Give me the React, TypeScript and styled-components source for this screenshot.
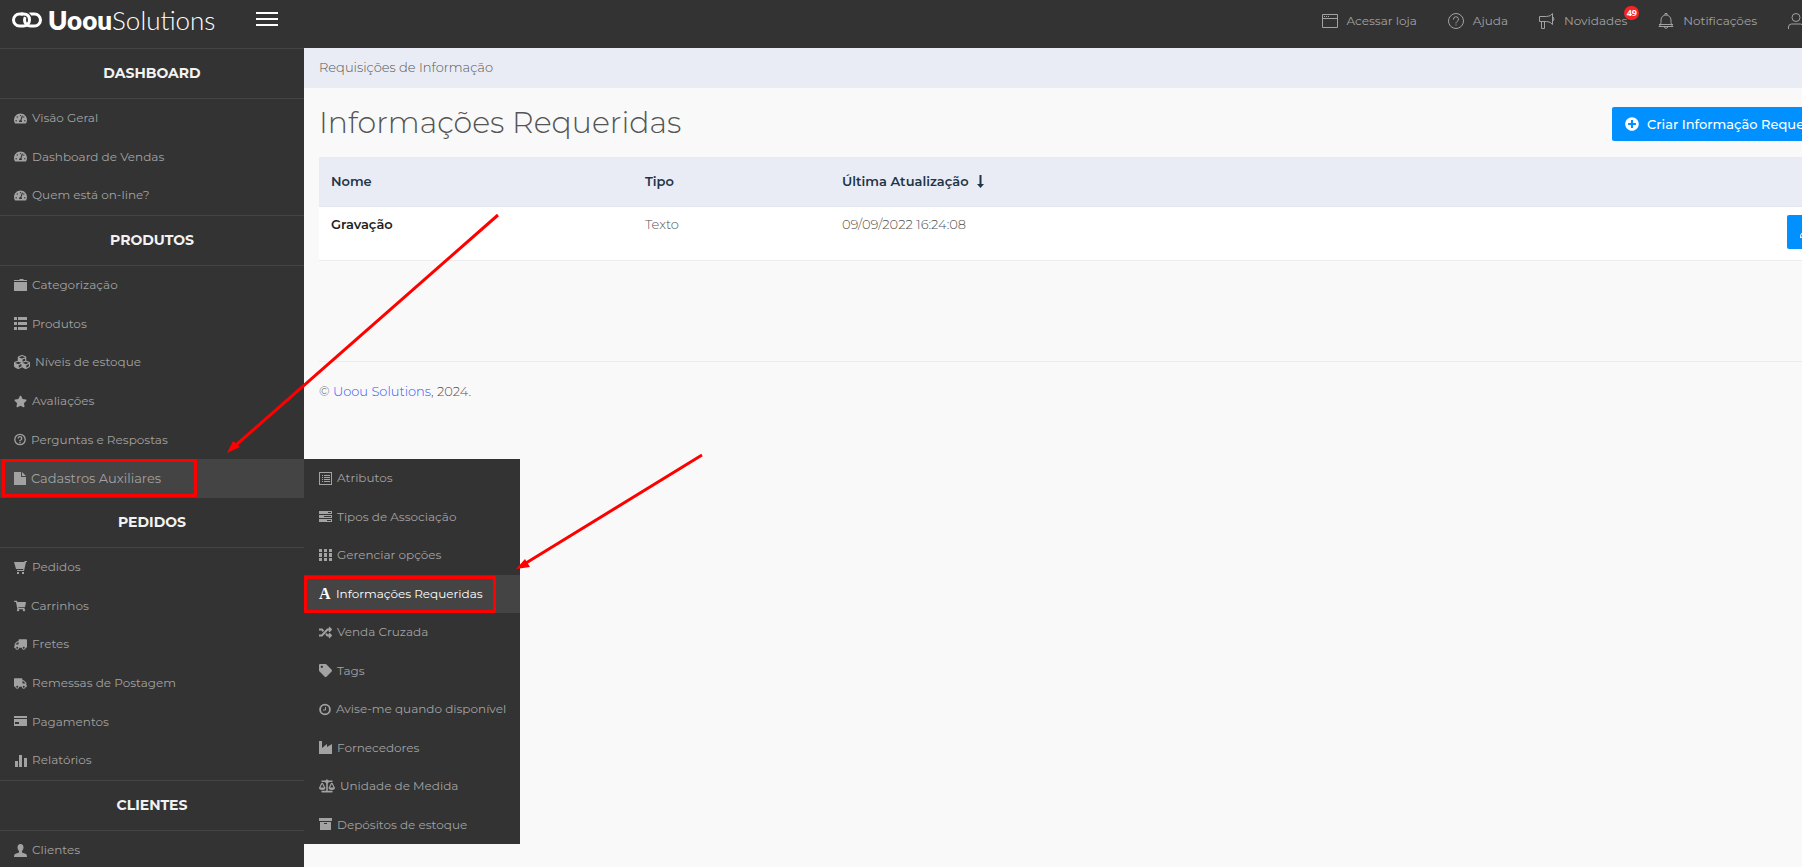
import React from "react";
import styled, { createGlobalStyle, css } from "styled-components";
import {
  FaTachometerAlt, FaCubes, FaStar, FaShoppingCart, FaTruck,
  FaRandom, FaTag, FaBalanceScale,
  FaPlusCircle, FaPencilAlt, FaTrash,
} from "react-icons/fa";

const Global = createGlobalStyle`
  *, *::before, *::after { box-sizing: border-box; }
  body { margin: 0; background: #f9f9f9; color: #555; font: 300 13px/18px Montserrat, Inter, sans-serif; }
  h1, h2, p, ul { margin: 0; padding: 0; }
  ul { list-style: none; }
  a { color: inherit; text-decoration: none; }
  button { font: inherit; border: 0; cursor: pointer; }
`;

const Viewport = styled.div`
  position: relative;
  height: 100vh;
  overflow: hidden;
`;
const Shell = styled.div`
  display: flex;
  flex-direction: column;
  width: calc(100% + 85px);
  min-height: 100%;
`;
const Header = styled.header`
  display: flex;
  align-items: center;
  height: 48px;
  flex: none;
  background: #333;
  color: #a2a2a2;
`;
const Brand = styled.a`
  display: flex;
  align-items: center;
  width: 256px;
  padding-left: 12px;
  height: 40px;
  margin-bottom: 8px;
  color: #fff;
  gap: 6px;
  font: 300 26px/28px Lato, sans-serif;
  b { font-weight: 800; }
`;
const MenuButton = styled.button`
  display: flex;
  padding: 0;
  margin-bottom: 10px;
  background: none;
  color: #fff;
`;
const TopNav = styled.nav`
  display: flex;
  margin-left: auto;
  margin-bottom: 7px;
  padding-right: 83px;
  gap: 31px;
`;
const TopLink = styled.a`
  position: relative;
  display: flex;
  align-items: center;
  gap: 9px;
  font-size: 12px;
  font-weight: 400;
`;
const Badge = styled.span`
  position: absolute;
  top: -6px;
  right: -12px;
  width: 15px;
  height: 14px;
  border-radius: 7px;
  background: #f62424;
  color: #fff;
  font: 700 9px/14px "Open Sans", sans-serif;
  text-align: center;
`;
const Body = styled.div`
  display: flex;
  flex: 1;
`;
const Sidebar = styled.nav`
  width: 304px;
  flex: none;
  background: #333;
  color: #a2a2a2;
`;
const GroupTitle = styled.h2<{ $joined?: boolean }>`
  border: solid #444;
  border-width: ${(p) => (p.$joined ? "0 0 1px" : "1px 0")};
  color: #f2f2f2;
  font-size: 14px;
  font-weight: 700;
  line-height: 49px;
  text-align: center;
`;
const Items = styled.ul`
  display: grid;
  grid-auto-rows: 39px 38px 39px;
`;
const Item = styled.li`
  position: relative;
`;
const ItemLink = styled.a<{ $active?: boolean; $bright?: boolean; $large?: boolean }>`
  display: flex;
  align-items: center;
  height: 100%;
  gap: 5px;
  padding: 0 0 1px 14px;
  font-size: ${(p) => (p.$large ? "13px" : "12px")};
  font-weight: 400;
  ${(p) => p.$active && css`background: #444;`}
  ${(p) => p.$bright && css`color: #fff;`}
  svg { flex: none; }
`;
const SubMenu = styled.ul`
  position: absolute;
  z-index: 2;
  top: 0;
  left: 100%;
  width: 216px;
  display: grid;
  grid-auto-rows: 39px 38px;
  background: #333;
  ${ItemLink} { padding-left: 15px; }
`;
const SerifLetter = styled.span`
  width: 12px;
  font: 700 16px/18px "Liberation Serif", serif;
`;
const Main = styled.main`
  flex: 1;
  min-width: 0;
`;
const Crumbs = styled.div`
  height: 40px;
  padding: 0 15px;
  background: #e9ecf4;
  line-height: 38px;
`;
const Content = styled.div`
  padding: 19px 15px;
`;
const TitleRow = styled.div`
  display: flex;
  justify-content: space-between;
  height: 34px;
  margin-bottom: 16px;
`;
const Title = styled.h1`
  font-size: 30px;
  font-weight: 300;
  line-height: 32px;
`;
const Primary = styled.button`
  display: flex;
  align-items: center;
  gap: 8px;
  width: 260px;
  height: 34px;
  padding: 0 13px;
  border-radius: 2px;
  background: #0090ff;
  color: #fff;
  font-weight: 500;
  white-space: nowrap;
`;
const SmallButton = styled(Primary)`
  width: 40px;
`;
const Actions = styled.div`
  display: flex;
  gap: 4px;
`;
const Table = styled.table`
  width: 100%;
  table-layout: fixed;
  border-collapse: collapse;
  background: #fff;
  text-align: left;
  th, td { padding: 0 12px; }
  thead th { height: 49px; background: #e9ecf4; color: #1f3547; font-weight: 600; border-bottom: 1px solid #e3e6ec; }
  tbody tr { border-bottom: 1px solid #ececec; vertical-align: top; }
  tbody th, tbody td { padding-top: 8px; height: 54px; }
  tbody th { color: #222; font-weight: 600; }
  tbody td:last-child { padding-right: 0; }
  thead svg { margin-left: 4px; vertical-align: -2px; }
`;
const Col = styled.col<{ $w?: number }>`
  width: ${(p) => (p.$w ? p.$w + "px" : "auto")};
`;
const Footer = styled.footer`
  margin-top: 100px;
  padding-top: 20px;
  border-top: 1px solid #ececec;
  a { color: #2f55f5; }
`;
const Marks = styled.svg`
  position: absolute;
  z-index: 3;
  inset: 0;
  width: 100%;
  height: 100%;
  pointer-events: none;
`;

const Glyph = ({ children, w = 13 }: { children: React.ReactNode; w?: number }) => (
  <svg width={w} height="13" viewBox={`0 0 ${w} 13`} fill="currentColor" aria-hidden="true">{children}</svg>
);
const Folder = () => <Glyph><path d="M1 1h4l1-1h3l1 1h3v1H0V1zM0 3h13v9H0z" /></Glyph>;
const ListRows = () => <Glyph><path d="M0 0h3v3H0zM4 0h9v3H4zM0 5h3v3H0zM4 5h9v3H4zM0 10h3v3H0zM4 10h9v3H4z" /></Glyph>;
const Basket = () => <Glyph><path d="M0 1h10l1-1h2v1h-1l-2 9H3V9h6l.5-1H2zM3 11h2v2H3zM8 11h2v2H8z" /></Glyph>;
const Card = () => <Glyph><path d="M0 1h13v2H0zM0 4h13v7H0zM1 7v2h4V7z" fillRule="evenodd" /></Glyph>;
const Bars = () => <Glyph><path d="M1 7h3v6H1zM5 1h3v12H5zM10 4h3v9h-3z" /></Glyph>;
const ListAlt = () => <Glyph><path d="M0 0h13v13H0zM1 1v11h11V1zM3 3h1v1H3zM5 3h6v1H5zM3 5h1v1H3zM5 5h6v1H5zM3 7h1v1H3zM5 7h6v1H5zM3 9h1v1H3zM5 9h6v1H5z" fillRule="evenodd" /></Glyph>;
const Tasks = () => <Glyph><path d="M0 1h13v3H0zM9 2v1h3V2zM0 5h13v3H0zM5 6v1h7V6zM0 9h13v3H0zM8 10v1h4v-1z" fillRule="evenodd" /></Glyph>;
const Grid = () => <Glyph><path d="M0 0h3v3H0zM5 0h3v3H5zM10 0h3v3h-3zM0 4h3v4H0zM5 4h3v4H5zM10 4h3v4h-3zM0 9h3v3H0zM5 9h3v3H5zM10 9h3v3h-3z" /></Glyph>;
const Page = () => <Glyph w={12}><path d="M0 0h7v5h5v8H0zM8 0l4 4H8z" /></Glyph>;
const Person = () => <Glyph><path d="M6.500 0q3 0 3 3.500 0 2-1.500 3.500v1.500l4 1.500q1 .5 1 3H0q0-2.500 1-3l4-1.500V7Q3.500 5.500 3.500 3.500 3.500 0 6.500 0z" /></Glyph>;
const Factory = () => <Glyph><path d="M0 0h3v7l5-4v3l5-3v10H0z" /></Glyph>;
const Box = () => <Glyph><path d="M0 0h13v3H0zM1 4h11v8H1zM5 5v1h3V5z" fillRule="evenodd" /></Glyph>;
const Clock = () => <Glyph w={12}><g fill="none" stroke="currentColor"><circle cx="6" cy="6.500" r="4.900" strokeWidth="1.800" /><path d="M6.500 4v3H4" /></g></Glyph>;
const Question = () => <Glyph w={12}><g fill="none" stroke="currentColor"><circle cx="6" cy="6.500" r="5.200" strokeWidth="1.300" /><path d="M4.200 5.500q0-1.800 1.800-1.800t1.800 1.500T6 7.500v.8M6 9v1.200" strokeWidth="1.300" /></g></Glyph>;
const SortArrow = () => <Glyph w={9}><path d="M3.500 0h2v9H8L4.500 13 1 9h2.500z" /></Glyph>;

const Line = ({ children }: { children: React.ReactNode }) => (
  <svg width="16" height="16" viewBox="0 0 16 16" fill="none" stroke="currentColor" aria-hidden="true">{children}</svg>
);

const Sections = [
  { title: "DASHBOARD", items: [
    ["Visão Geral", <FaTachometerAlt size={13} />],
    ["Dashboard de Vendas", <FaTachometerAlt size={13} />],
    ["Quem está on-line?", <FaTachometerAlt size={13} />],
  ] },
  { title: "PRODUTOS", items: [
    ["Categorização", <Folder />],
    ["Produtos", <ListRows />],
    ["Níveis de estoque", <FaCubes size={16} />],
    ["Avaliações", <FaStar size={13} />],
    ["Perguntas e Respostas", <Question />],
    ["Cadastros Auxiliares", <Page />],
  ] },
  { title: "PEDIDOS", items: [
    ["Pedidos", <Basket />],
    ["Carrinhos", <FaShoppingCart size={12} />],
    ["Fretes", <FaTruck size={13} transform="scale(-1 1)" />],
    ["Remessas de Postagem", <FaTruck size={13} />],
    ["Pagamentos", <Card />],
    ["Relatórios", <Bars />],
  ] },
  { title: "CLIENTES", items: [["Clientes", <Person />]] },
] as { title: string; items: [string, React.ReactNode][] }[];

const SubItems: [string, React.ReactNode][] = [
  ["Atributos", <ListAlt />],
  ["Tipos de Associação", <Tasks />],
  ["Gerenciar opções", <Grid />],
  ["Informações Requeridas", <SerifLetter aria-hidden="true">A</SerifLetter>],
  ["Venda Cruzada", <FaRandom size={13} />],
  ["Tags", <FaTag size={13} />],
  ["Avise-me quando disponível", <Clock />],
  ["Fornecedores", <Factory />],
  ["Unidade de Medida", <FaBalanceScale size={16} />],
  ["Depósitos de estoque", <Box />],
];

export default function App() {
  return (
    <Viewport>
      <Global />
      <Shell>
        <Header>
          <Brand href="#">
            <svg width="30" height="16" viewBox="0 0 30 16" fill="none" stroke="currentColor" strokeWidth="3" aria-hidden="true">
              <rect x="1.500" y="2" width="16" height="12" rx="6" />
              <rect x="12.500" y="2" width="16" height="12" rx="6" stroke="#333" strokeWidth="5" strokeDasharray="0 33 14 20" />
              <rect x="12.500" y="2" width="16" height="12" rx="6" />
              <path d="M11 2q6.500 0 6.500 6" stroke="#333" strokeWidth="5" />
              <path d="M9 2h2.500q6 0 6 6" />
            </svg>
            <span><b>Uoou</b>Solutions</span>
          </Brand>
          <MenuButton aria-label="Menu">
            <svg width="22" height="14" viewBox="0 0 22 14" fill="currentColor"><path d="M0 0h22v2H0zM0 6h22v2H0zM0 12h22v2H0z" /></svg>
          </MenuButton>
          <TopNav>
            <TopLink href="#"><Line><path d="M.5 1.500h15v13H.5zM.5 5.500h15M2 3.500h1M4 3.500h1M6 3.500h1" /></Line>Acessar loja</TopLink>
            <TopLink href="#"><Line><circle cx="8" cy="8" r="7.500" /><path d="M5.500 6.500a2.500 2.500 0 1 1 3.500 2q-1 .5-1 2M8 11.500v1" /></Line>Ajuda</TopLink>
            <TopLink href="#"><Line><path d="M.5 3.500h7q4 0 6-3v11q-2-3-6-3h-7zM2.500 8.500v7h3v-7M14 4q2 2 0 4" /></Line>Novidades<Badge>49</Badge></TopLink>
            <TopLink href="#"><Line><path d="M1 13.500h14q-2-1-2-4V7a5 5 0 0 0-10 0v2.500q0 3-2 4zM6 14q2 3 4 0M7 2V.5h2V2M1 11.500h14" /></Line>Notificações</TopLink>
            <TopLink href="#" aria-label="Conta"><Line><circle cx="8" cy="4.500" r="4" /><path d="M.5 16v-2q0-3 3-3h9q3 0 3 3v2" /></Line></TopLink>
          </TopNav>
        </Header>
        <Body>
          <Sidebar>
            {Sections.map((s) => (
              <section key={s.title}>
                <GroupTitle $joined={s.title === "PEDIDOS"}>{s.title}</GroupTitle>
                <Items>
                  {s.items.map(([label, icon]) => {
                    const open = label === "Cadastros Auxiliares";
                    return (
                      <Item key={label}>
                        <ItemLink href="#" $active={open} $large={open}>{icon}{label}</ItemLink>
                        {open && (
                          <SubMenu>
                            {SubItems.map(([sub, subIcon]) => {
                              const on = sub === "Informações Requeridas";
                              return <li key={sub}><ItemLink href="#" $active={on} $bright={on}>{subIcon}{sub}</ItemLink></li>;
                            })}
                          </SubMenu>
                        )}
                      </Item>
                    );
                  })}
                </Items>
              </section>
            ))}
          </Sidebar>
          <Main>
            <Crumbs>Requisições de Informação</Crumbs>
            <Content>
              <TitleRow>
                <Title>Informações Requeridas</Title>
                <Primary><FaPlusCircle size={14} />Criar Informação Requerida</Primary>
              </TitleRow>
              <Table>
                <colgroup><Col $w={314} /><Col $w={197} /><Col /><Col $w={97} /></colgroup>
                <thead>
                  <tr><th>Nome</th><th>Tipo</th><th>Última Atualização <SortArrow /></th><th aria-label="Ações" /></tr>
                </thead>
                <tbody>
                  <tr>
                    <th scope="row">Gravação</th><td>Texto</td><td>09/09/2022 16:24:08</td>
                    <td><Actions><SmallButton aria-label="Editar"><FaPencilAlt size={13} /></SmallButton><SmallButton aria-label="Excluir"><FaTrash size={13} /></SmallButton></Actions></td>
                  </tr>
                </tbody>
              </Table>
              <Footer>© <a href="#">Uoou Solutions</a>, 2024.</Footer>
            </Content>
          </Main>
        </Body>
      </Shell>
      <Marks aria-hidden="true">
        <g fill="none" stroke="#f00" strokeWidth="3">
          <rect x="3.500" y="460.500" width="192" height="35" />
          <rect x="305.500" y="577.500" width="189" height="34" />
          <path d="M498 215 236 445M702 455 526 563" />
        </g>
        <path d="M227 453l6-12 7 6zM516 569l9-10 5 8z" fill="#f00" />
      </Marks>
    </Viewport>
  );
}
